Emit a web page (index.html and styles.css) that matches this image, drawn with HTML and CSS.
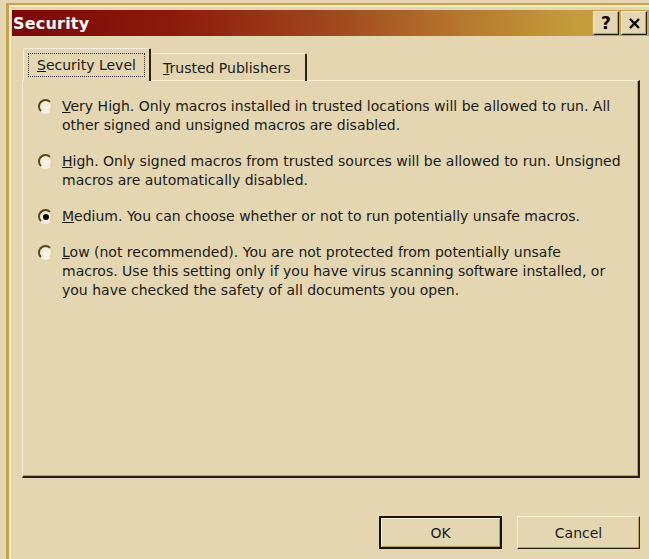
FILE: index.html
```html
<!DOCTYPE html>
<html lang="en">
<head>
<meta charset="utf-8">
<title>Security</title>
<link rel="stylesheet" href="styles.css">
</head>
<body>
<div class="window">
  <div class="titlebar">
    <span class="title">Security</span>
    <div class="caption-buttons">
      <button class="cap-btn" type="button">?</button>
      <button class="cap-btn close" type="button">
        <svg width="11" height="11" viewBox="0 0 11 11"><path d="M1 1 L10 10 M10 1 L1 10" stroke="#000" stroke-width="2.4"/></svg>
      </button>
    </div>
  </div>
  <div class="client">
    <div class="tabs">
      <div class="tab active"><span class="focus"><u>S</u>ecurity Level</span></div>
      <div class="tab"><span><u>T</u>rusted Publishers</span></div>
    </div>
    <div class="panel">
      <label class="option">
        <span class="radio"></span>
        <span class="text"><u>V</u>ery High. Only macros installed in trusted locations will be allowed to run. All<br>other signed and unsigned macros are disabled.</span>
      </label>
      <label class="option">
        <span class="radio"></span>
        <span class="text"><u>H</u>igh. Only signed macros from trusted sources will be allowed to run. Unsigned<br>macros are automatically disabled.</span>
      </label>
      <label class="option">
        <span class="radio checked"></span>
        <span class="text"><u>M</u>edium. You can choose whether or not to run potentially unsafe macros.</span>
      </label>
      <label class="option">
        <span class="radio"></span>
        <span class="text"><u>L</u>ow (not recommended). You are not protected from potentially unsafe<br>macros. Use this setting only if you have virus scanning software installed, or<br>you have checked the safety of all documents you open.</span>
      </label>
    </div>
    <div class="actions">
      <button class="btn default" type="button">OK</button>
      <button class="btn" type="button">Cancel</button>
    </div>
  </div>
</div>
</body>
</html>
```

FILE: styles.css
```css
html, body {
  margin: 0;
  padding: 0;
  height: 100%;
  overflow: hidden;
  background: #e3d6b0;
}

body {
  font-family: "DejaVu Sans", Verdana, sans-serif;
  font-size: 14px;
  color: #1a1a1a;
}

.window {
  margin: 3px 0 0 6px;
  border-top: 2px solid #c6a44c;
  border-left: 3px solid #c6a44c;
  padding: 5px 0 0 3px;
  height: 560px;
  box-shadow: inset 2px 2px 0 #f1e8c8;
}

.titlebar {
  height: 26px;
  display: flex;
  align-items: center;
  justify-content: space-between;
  padding: 0 2px 0 1px;
  background: linear-gradient(to right, #7a0808 0%, #8c1a0c 25%, #a2461e 50%, #b4762e 70%, #c49c3a 88%, #c8a33e 100%);
}

.title {
  color: #fff;
  font-weight: bold;
  font-size: 16px;
  letter-spacing: 0.2px;
}

.caption-buttons {
  display: flex;
  gap: 2px;
}

.cap-btn {
  width: 26px;
  height: 24px;
  padding: 0;
  margin: 0;
  display: flex;
  align-items: center;
  justify-content: center;
  background: #e3d6b0;
  border: 1px solid;
  border-color: #f8f1da #2a2010 #2a2010 #f8f1da;
  box-shadow: inset -1px -1px 0 #b89a50;
  font-family: "DejaVu Sans", sans-serif;
  font-weight: bold;
  font-size: 17px;
  color: #000;
  line-height: 1;
}

.client {
  padding: 12px 9px 0 10px;
}

.tabs {
  display: flex;
  align-items: flex-end;
  height: 33px;
  margin-bottom: -1px;
  position: relative;
  z-index: 1;
}

.tab {
  height: 28px;
  display: flex;
  align-items: center;
  border-top: 1px solid #f6eed6;
  border-right: 2px solid #2a2010;
  border-radius: 2px 2px 0 0;
  box-sizing: border-box;
  white-space: nowrap;
}

.tab.active {
  height: 33px;
  width: 128px;
  margin-left: 1px;
  padding: 0 4px;
  border-left: 1px solid #f6eed6;
  background: #e3d6b0;
}

.tab.active .focus {
  display: inline-block;
  padding: 4px 0 4px 9px;
  outline: 1px dotted #333;
  outline-offset: -1px;
  width: 118px;
  box-sizing: border-box;
}

.tab:not(.active) {
  padding: 0 0 0 12px;
  width: 156px;
}

.panel {
  height: 398px;
  box-sizing: border-box;
  padding: 16px 8px 0 15px;
  border-top: 1px solid #f8f0d8;
  border-left: 1px solid #f8f0d8;
  border-right: 2px solid #2a2010;
  border-bottom: 2px solid #2a2010;
  box-shadow: inset -1px -1px 0 #c0a050;
}

.option {
  display: flex;
  align-items: flex-start;
  gap: 9px;
  line-height: 19px;
  margin-bottom: 17px;
}

.radio {
  flex: none;
  width: 15px;
  height: 15px;
  margin-top: 2px;
  border-radius: 50%;
  box-sizing: border-box;
  border: 2px solid;
  border-color: #5a4418 #e0d2a0 #f6f0e0 #5a4418;
  background: radial-gradient(circle at 60% 60%, #f8f5ea 0%, #ebe3c9 100%);
  position: relative;
}

.radio.checked::after {
  content: "";
  position: absolute;
  left: 2.5px;
  top: 2.5px;
  width: 6px;
  height: 6px;
  border-radius: 50%;
  background: #000;
}

.text {
  flex: 1;
  white-space: nowrap;
}

.actions {
  display: flex;
  justify-content: flex-end;
  gap: 15px;
  margin-top: 38px;
}

.btn {
  width: 123px;
  height: 33px;
  margin: 0;
  padding: 0;
  font-family: "DejaVu Sans", Verdana, sans-serif;
  font-size: 14px;
  color: #1a1a1a;
  background: #e3d6b0;
  border: 1px solid;
  border-color: #f8f1da #2a2010 #2a2010 #f8f1da;
  box-shadow: inset -1px -1px 0 #c0a050;
}

.btn.default {
  border: 2px solid #1a1408;
  box-shadow: inset 1px 1px 0 #f8f1da, inset -1px -1px 0 #b89a50;
}
```
